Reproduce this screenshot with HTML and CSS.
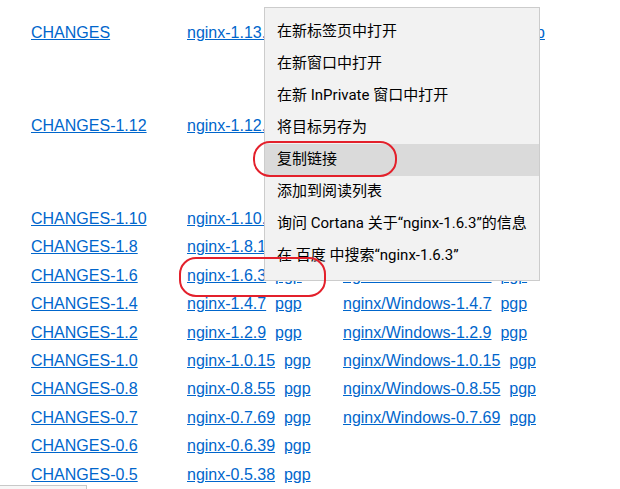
FILE: index.html
```html
<!DOCTYPE html>
<html lang="zh-CN">
<head>
<meta charset="utf-8">
<title>nginx: download</title>
<link rel="stylesheet" href="styles.css">
</head>
<body>
<div class="page">
  <div class="sec">
    <div class="row">
      <div class="c1"><a href="#">CHANGES</a></div>
      <div class="c2"><a href="#">nginx-1.13.12</a>&nbsp;&nbsp;<a href="#">pgp</a></div>
      <div class="c3"><a href="#">nginx/Windows-1.13.12</a>&nbsp;&nbsp;<a href="#">pgp</a></div>
    </div>
  </div>
  <div class="sec">
    <div class="row">
      <div class="c1"><a href="#">CHANGES-1.12</a></div>
      <div class="c2"><a href="#">nginx-1.12.2</a>&nbsp;&nbsp;<a href="#">pgp</a></div>
      <div class="c3"><a href="#">nginx/Windows-1.12.2</a>&nbsp;&nbsp;<a href="#">pgp</a></div>
    </div>
  </div>
  <div class="sec">
    <div class="row">
      <div class="c1"><a href="#">CHANGES-1.10</a></div>
      <div class="c2"><a href="#">nginx-1.10.3</a>&nbsp;&nbsp;<a href="#">pgp</a></div>
      <div class="c3"><a href="#">nginx/Windows-1.10.3</a>&nbsp;&nbsp;<a href="#">pgp</a></div>
    </div>
    <div class="row">
      <div class="c1"><a href="#">CHANGES-1.8</a></div>
      <div class="c2"><a href="#">nginx-1.8.1</a>&nbsp;&nbsp;<a href="#">pgp</a></div>
      <div class="c3"><a href="#">nginx/Windows-1.8.1</a>&nbsp;&nbsp;<a href="#">pgp</a></div>
    </div>
    <div class="row">
      <div class="c1"><a href="#">CHANGES-1.6</a></div>
      <div class="c2"><a href="#">nginx-1.6.3</a>&nbsp;&nbsp;<a href="#">pgp</a></div>
      <div class="c3"><a href="#">nginx/Windows-1.6.3</a>&nbsp;&nbsp;<a href="#">pgp</a></div>
    </div>
    <div class="row">
      <div class="c1"><a href="#">CHANGES-1.4</a></div>
      <div class="c2"><a href="#">nginx-1.4.7</a>&nbsp;&nbsp;<a href="#">pgp</a></div>
      <div class="c3"><a href="#">nginx/Windows-1.4.7</a>&nbsp;&nbsp;<a href="#">pgp</a></div>
    </div>
    <div class="row">
      <div class="c1"><a href="#">CHANGES-1.2</a></div>
      <div class="c2"><a href="#">nginx-1.2.9</a>&nbsp;&nbsp;<a href="#">pgp</a></div>
      <div class="c3"><a href="#">nginx/Windows-1.2.9</a>&nbsp;&nbsp;<a href="#">pgp</a></div>
    </div>
    <div class="row">
      <div class="c1"><a href="#">CHANGES-1.0</a></div>
      <div class="c2"><a href="#">nginx-1.0.15</a>&nbsp;&nbsp;<a href="#">pgp</a></div>
      <div class="c3"><a href="#">nginx/Windows-1.0.15</a>&nbsp;&nbsp;<a href="#">pgp</a></div>
    </div>
    <div class="row">
      <div class="c1"><a href="#">CHANGES-0.8</a></div>
      <div class="c2"><a href="#">nginx-0.8.55</a>&nbsp;&nbsp;<a href="#">pgp</a></div>
      <div class="c3"><a href="#">nginx/Windows-0.8.55</a>&nbsp;&nbsp;<a href="#">pgp</a></div>
    </div>
    <div class="row">
      <div class="c1"><a href="#">CHANGES-0.7</a></div>
      <div class="c2"><a href="#">nginx-0.7.69</a>&nbsp;&nbsp;<a href="#">pgp</a></div>
      <div class="c3"><a href="#">nginx/Windows-0.7.69</a>&nbsp;&nbsp;<a href="#">pgp</a></div>
    </div>
    <div class="row">
      <div class="c1"><a href="#">CHANGES-0.6</a></div>
      <div class="c2"><a href="#">nginx-0.6.39</a>&nbsp;&nbsp;<a href="#">pgp</a></div>
      <div class="c3"></div>
    </div>
    <div class="row">
      <div class="c1"><a href="#">CHANGES-0.5</a></div>
      <div class="c2"><a href="#">nginx-0.5.38</a>&nbsp;&nbsp;<a href="#">pgp</a></div>
      <div class="c3"></div>
    </div>
  </div>
</div>

<ul class="menu">
  <li class="item">在新标签页中打开</li>
  <li class="item">在新窗口中打开</li>
  <li class="item">在新 InPrivate 窗口中打开</li>
  <li class="item">将目标另存为</li>
  <li class="item active">复制链接</li>
  <li class="item">添加到阅读列表</li>
  <li class="item">询问 Cortana 关于“nginx-1.6.3”的信息</li>
  <li class="item">在 百度 中搜索“nginx-1.6.3”</li>
</ul>

<div class="mark mark-copy"></div>
<div class="mark mark-link"></div>
<div class="status"></div>
</body>
</html>
```

FILE: styles.css
```css
html, body {
  margin: 0;
  padding: 0;
  background: #ffffff;
}

body {
  width: 620px;
  height: 489px;
  overflow: hidden;
  position: relative;
  font-family: "Liberation Sans", Arial, sans-serif;
  font-size: 16px;
  color: #000;
}

.page {
  padding: 18.6px 0 0 31px;
  display: flex;
  flex-direction: column;
  gap: 64.8px;
}

.sec {
  display: flex;
  flex-direction: column;
}

.row {
  display: grid;
  grid-template-columns: 156px 156px auto;
  padding: 5px 0;
  line-height: 18.4px;
  white-space: nowrap;
}

a {
  color: #0066cc;
  text-decoration: underline;
}

.menu {
  position: absolute;
  left: 264px;
  top: 7px;
  width: 274px;
  margin: 0;
  padding: 8px 0;
  list-style: none;
  background: #f2f2f2;
  border: 1px solid #cccccc;
  font-family: Roboto, "Noto Sans CJK SC", sans-serif;
  font-size: 15px;
  color: #000;
}

.item {
  height: 32px;
  line-height: 30px;
  padding-left: 12px;
  white-space: nowrap;
}

.item.active {
  background: #dadada;
}

.mark {
  position: absolute;
  border: 2px solid #e3202b;
  border-radius: 17px;
  box-sizing: border-box;
}

.mark-copy {
  left: 253px;
  top: 141px;
  width: 144px;
  height: 36px;
}

.mark-link {
  left: 179px;
  top: 257px;
  width: 147px;
  height: 40px;
}

.status {
  position: absolute;
  left: 0;
  top: 485px;
  width: 86px;
  height: 10px;
  background: #f7f7f7;
  border-top: 1px solid #c8c8c8;
  border-right: 1px solid #c8c8c8;
}
```
